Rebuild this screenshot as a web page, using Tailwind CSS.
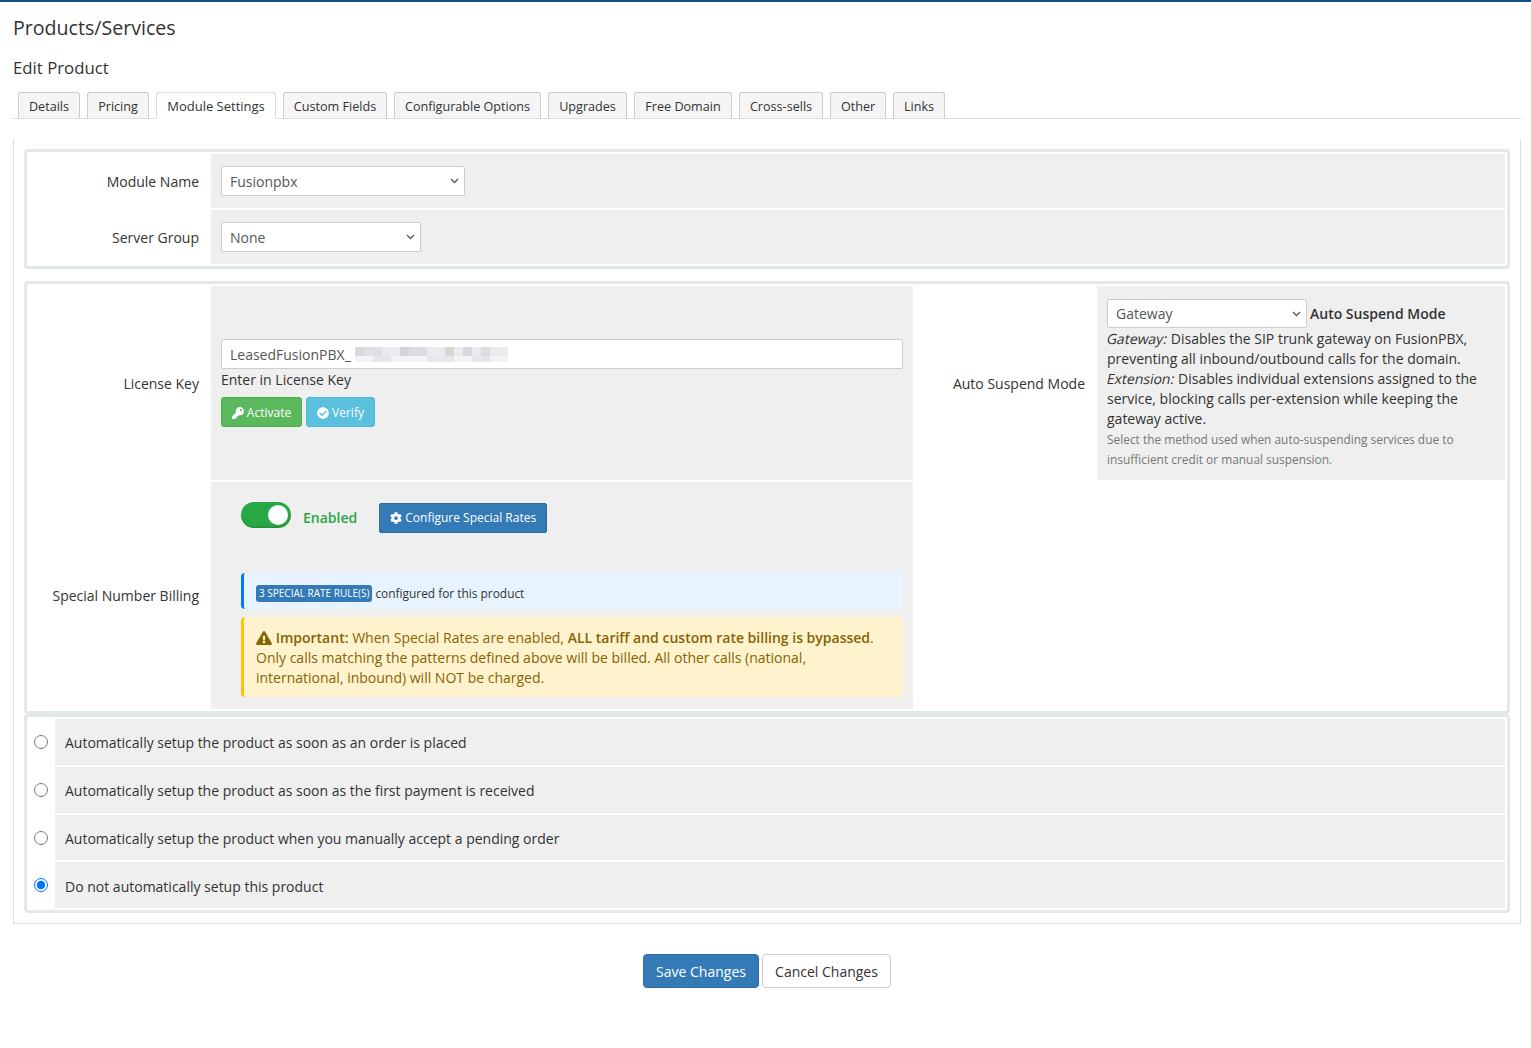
<!DOCTYPE html>
<html lang="en">
<head>
  <meta charset="utf-8">
  <title>Products/Services</title>
  <script src="https://cdn.jsdelivr.net/npm/@tailwindcss/browser@4"></script>
</head>
<body class="bg-white text-[#333] text-[14px] leading-[20px] font-['Open_Sans',sans-serif]">
  <div class="h-[2px] bg-[#1a4d80]"></div>
  <div class="px-[13px] pr-[10px] h-[1046px]">
    <h1 class="text-[19.6px] leading-[28px] mt-[12px] font-normal">Products/Services</h1>
    <h2 class="text-[16.8px] leading-[24px] mt-[14px] font-normal">Edit Product</h2>

    <!-- tabs -->
    <div class="flex gap-[7px] pl-[5px] mt-[12px] h-[27px] border-b border-[#ddd] text-[12.6px] text-center">
      <a class="h-[27px] w-[62px] pt-[4px] bg-[#f5f5f5] border border-[#ccc] border-b-[#ddd] rounded-t-[3px]">Details</a>
      <a class="h-[27px] w-[62px] pt-[4px] bg-[#f5f5f5] border border-[#ccc] border-b-[#ddd] rounded-t-[3px]">Pricing</a>
      <a class="h-[27px] w-[120px] pt-[3px] bg-white border border-[#ddd] border-b-white rounded-t-[3px] text-[13px]">Module Settings</a>
      <a class="h-[27px] w-[104px] pt-[4px] bg-[#f5f5f5] border border-[#ccc] border-b-[#ddd] rounded-t-[3px]">Custom Fields</a>
      <a class="h-[27px] w-[147px] pt-[4px] bg-[#f5f5f5] border border-[#ccc] border-b-[#ddd] rounded-t-[3px]">Configurable Options</a>
      <a class="h-[27px] w-[79px] pt-[4px] bg-[#f5f5f5] border border-[#ccc] border-b-[#ddd] rounded-t-[3px]">Upgrades</a>
      <a class="h-[27px] w-[98px] pt-[4px] bg-[#f5f5f5] border border-[#ccc] border-b-[#ddd] rounded-t-[3px]">Free Domain</a>
      <a class="h-[27px] w-[84px] pt-[4px] bg-[#f5f5f5] border border-[#ccc] border-b-[#ddd] rounded-t-[3px]">Cross-sells</a>
      <a class="h-[27px] w-[56px] pt-[4px] bg-[#f5f5f5] border border-[#ccc] border-b-[#ddd] rounded-t-[3px]">Other</a>
      <a class="h-[27px] w-[52px] pt-[4px] bg-[#f5f5f5] border border-[#ccc] border-b-[#ddd] rounded-t-[3px]">Links</a>
    </div>

    <!-- tab pane -->
    <div class="mt-[20px] w-[1508px] border border-t-0 border-[#ddd] px-[10px] pt-[10px] pb-[10px]">

      <div class="border-[3px] border-[#e3e8ea] rounded-[4px] p-[2px] pl-0 grid grid-cols-[184px_1fr] gap-y-[2px]">
        <div class="h-[54px] flex items-center justify-end pr-[12px] pt-[1px]">Module Name</div>
        <div class="h-[54px] bg-[#efefef] flex items-center pl-[10px]">
          <div class="relative">
            <select class="block appearance-none w-[244px] h-[30px] pl-[8px] pt-[2px] bg-white border border-[#ccc] rounded-[2px] text-[#555]"><option>Fusionpbx</option></select>
            <svg class="absolute right-[6px] top-[12px] w-[9px] h-[6px] stroke-[#555] fill-none" viewBox="0 0 9 6"><path d="M1 1l3.5 3.5L8 1" stroke-width="1.3"/></svg>
          </div>
        </div>
        <div class="h-[54px] flex items-center justify-end pr-[12px] pt-[1px]">Server Group</div>
        <div class="h-[54px] bg-[#efefef] flex items-center pl-[10px]">
          <div class="relative">
            <select class="block appearance-none w-[200px] h-[30px] pl-[8px] pt-[2px] bg-white border border-[#ccc] rounded-[2px] text-[#555]"><option>None</option></select>
            <svg class="absolute right-[6px] top-[12px] w-[9px] h-[6px] stroke-[#555] fill-none" viewBox="0 0 9 6"><path d="M1 1l3.5 3.5L8 1" stroke-width="1.3"/></svg>
          </div>
        </div>
      </div>

      <div class="mt-[12px] border-[3px] border-[#e3e8ea] rounded-[4px] p-[2px] pl-0 grid grid-cols-[184px_702px_184px_1fr] gap-y-[2px]">
        <div class="flex items-center justify-end pr-[12px] h-[194px] pt-[1px]">License Key</div>
        <div class="bg-[#efefef] h-[194px] pl-[10px] pr-[10px] pt-[53px]">
          <div class="relative">
            <input class="block w-full h-[30px] px-[8px] bg-white border border-[#ccc] rounded-[2px] text-[#555]" value="LeasedFusionPBX_">
            <svg class="absolute left-[134px] top-[8px]" width="153" height="15" viewBox="0 0 153 15">
              <rect width="153" height="9" fill="#ebebef"/>
              <rect y="9" width="153" height="6" fill="#f3f3f4"/>
              <rect x="0" width="9" height="9" fill="#d8d8e0"/>
              <rect x="9" width="18" height="9" fill="#e0e0e4"/>
              <rect x="45" width="9" height="9" fill="#d2d2d8"/>
              <rect x="54" width="18" height="9" fill="#dcdce0"/>
              <rect x="90" width="9" height="9" fill="#d6d6d2"/>
              <rect x="108" width="9" height="9" fill="#d8d8de"/>
              <rect x="126" width="9" height="9" fill="#dddde0"/>
              <rect x="18" y="9" width="18" height="6" fill="#e6e6e8"/>
              <rect x="72" y="9" width="27" height="6" fill="#e8e8ea"/>
              <rect x="117" y="9" width="18" height="6" fill="#e6e6e8"/>
            </svg>
          </div>
          <div class="mt-[1px]">Enter in License Key</div>
          <div class="flex gap-[4px] mt-[7px] text-[12px] text-white">
            <button class="h-[30px] w-[81px] pt-[1px] flex items-center justify-center gap-[3px] bg-[#5cb85c] border border-[#4cae4c] rounded-[3px]">
              <svg class="w-[12px] h-[12px] fill-white" viewBox="0 0 512 512"><path d="M512 176.001C512 273.203 433.202 352 336 352c-11.22 0-22.19-1.062-32.827-3.069l-24.012 27.014A23.999 23.999 0 0 1 261.223 384H224v40c0 13.255-10.745 24-24 24h-40v40c0 13.255-10.745 24-24 24H24c-13.255 0-24-10.745-24-24v-78.059c0-6.365 2.529-12.47 7.029-16.971l161.802-161.802C163.108 213.814 160 195.271 160 176 160 78.798 238.797.001 335.999 0 433.488-.001 512 78.511 512 176.001zM336 128c0 26.51 21.49 48 48 48s48-21.49 48-48-21.49-48-48-48-48 21.49-48 48z"/></svg>
              Activate
            </button>
            <button class="h-[30px] w-[69px] pt-[1px] flex items-center justify-center gap-[3px] bg-[#5bc0de] border border-[#46b8da] rounded-[3px]">
              <svg class="w-[12px] h-[12px] fill-white" viewBox="0 0 512 512"><path d="M504 256c0 136.967-111.033 248-248 248S8 392.967 8 256 119.033 8 256 8s248 111.033 248 248zM227.314 387.314l184-184c6.248-6.248 6.248-16.379 0-22.627l-22.627-22.627c-6.248-6.249-16.379-6.249-22.628 0L216 308.118l-70.059-70.059c-6.248-6.248-16.379-6.248-22.628 0l-22.627 22.627c-6.248 6.248-6.248 16.379 0 22.627l104 104c6.249 6.249 16.379 6.249 22.628.001z"/></svg>
              Verify
            </button>
          </div>
        </div>
        <div class="flex items-center justify-end pr-[12px] h-[194px] pt-[1px]">Auto Suspend Mode</div>
        <div class="bg-[#efefef] h-[194px] pl-[10px] pr-[8px] pt-[13px]">
          <div class="flex items-center gap-[3px]">
            <div class="relative">
              <select class="block appearance-none w-[200px] h-[29px] pl-[8px] bg-white border border-[#ccc] rounded-[2px] text-[#555]"><option>Gateway</option></select>
              <svg class="absolute right-[6px] top-[12px] w-[9px] h-[6px] stroke-[#555] fill-none" viewBox="0 0 9 6"><path d="M1 1l3.5 3.5L8 1" stroke-width="1.3"/></svg>
            </div>
            <b class="font-semibold">Auto Suspend Mode</b>
          </div>
          <div class="mt-[1px]"><span class="inline-block -skew-x-12">Gateway:</span> Disables the SIP trunk gateway on FusionPBX, preventing all inbound/outbound calls for the domain.</div>
          <div><span class="inline-block -skew-x-12">Extension:</span> Disables individual extensions assigned to the service, blocking calls per-extension while keeping the gateway active.</div>
          <div class="text-[11.9px] text-[#777]">Select the method used when auto-suspending services due to insufficient credit or manual suspension.</div>
        </div>

        <div class="flex items-center justify-end pr-[12px] h-[227px]">Special Number Billing</div>
        <div class="bg-[#efefef] h-[227px] pl-[30px] pr-[10px] pt-[20px]">
          <div class="flex items-center h-[32px]">
            <div class="w-[50px] h-[26px] -mt-[6px] rounded-full bg-[#28a745] shadow-[inset_0_-1px_2px_rgba(0,0,0,0.2)] flex items-center justify-end pr-[3px]">
              <span class="w-[20px] h-[20px] rounded-full bg-white"></span>
            </div>
            <span class="ml-[12px] font-semibold text-[#28a745]">Enabled</span>
            <button class="ml-[22px] h-[30px] w-[168px] flex items-center justify-center gap-[3px] bg-[#337ab7] border border-[#2e6da4] rounded-[2px] text-white text-[12px]">
              <svg class="w-[12px] h-[12px] fill-white" viewBox="0 0 512 512"><path d="M487.4 315.7l-42.6-24.6c4.3-23.2 4.3-47 0-70.2l42.6-24.6c4.9-2.8 7.1-8.6 5.5-14-11.1-35.6-30-67.8-54.7-94.6-3.8-4.1-10-5.1-14.8-2.3L380.8 110c-17.9-15.4-38.5-27.3-60.8-35.1V25.8c0-5.6-3.9-10.5-9.4-11.7-36.7-8.2-74.3-7.8-109.2 0-5.5 1.2-9.4 6.1-9.4 11.7V75c-22.2 7.9-42.8 19.8-60.8 35.1L88.7 85.5c-4.9-2.8-11-1.9-14.8 2.3-24.7 26.7-43.6 58.9-54.7 94.6-1.7 5.4.6 11.2 5.5 14L67.3 221c-4.3 23.2-4.3 47 0 70.2l-42.6 24.6c-4.9 2.8-7.1 8.6-5.5 14 11.1 35.6 30 67.8 54.7 94.6 3.8 4.1 10 5.1 14.8 2.3l42.6-24.6c17.9 15.4 38.5 27.3 60.8 35.1v49.2c0 5.6 3.9 10.5 9.4 11.7 36.7 8.2 74.3 7.8 109.2 0 5.5-1.2 9.4-6.1 9.4-11.7v-49.2c22.2-7.9 42.8-19.8 60.8-35.1l42.6 24.6c4.9 2.8 11 1.9 14.8-2.3 24.7-26.7 43.6-58.9 54.7-94.6 1.5-5.5-.7-11.3-5.6-14.1zM256 336c-44.1 0-80-35.9-80-80s35.9-80 80-80 80 35.9 80 80-35.9 80-80 80z"/></svg>
              Configure Special Rates
            </button>
          </div>
          <div class="mt-[39px] h-[36px] pt-[4px] bg-[#e7f3ff] border-l-[3px] border-[#007bff] rounded-[4px] pl-[12px] flex items-center gap-[3px] text-[11.9px]">
            <span class="h-[17px] px-[3px] flex items-center bg-[#337ab7] text-white text-[10px] rounded-[3px] uppercase">3 Special Rate Rule(s)</span>
            configured for this product
          </div>
          <div class="mt-[8px] h-[80px] bg-[#fff3cd] border-l-[3px] border-[#ffc107] rounded-[4px] pl-[12px] pr-[20px] pt-[11px] text-[#856404]">
            <svg class="inline-block align-[-2px] w-[16px] h-[14px] fill-[#856404]" viewBox="0 0 576 512"><path d="M569.517 440.013C587.975 472.007 564.806 512 527.94 512H48.054c-36.937 0-59.999-40.055-41.577-71.987L246.423 23.985c18.467-32.009 64.72-31.951 83.154 0l239.94 416.028zM288 354c-25.405 0-46 20.595-46 46s20.595 46 46 46 46-20.595 46-46-20.595-46-46-46zm-43.673-165.346l7.418 136c.347 6.364 5.609 11.346 11.982 11.346h48.546c6.373 0 11.635-4.982 11.982-11.346l7.418-136c.375-6.874-5.098-12.654-11.982-12.654h-63.383c-6.884 0-12.356 5.78-11.981 12.654z"/></svg>
            <b class="font-semibold">Important:</b> When Special Rates are enabled, <b class="font-semibold">ALL tariff and custom rate billing is bypassed</b>. Only calls matching the patterns defined above will be billed. All other calls (national, international, inbound) will NOT be charged.
          </div>
        </div>
        <div class="col-span-2 h-[227px]"></div>
      </div>

      <div class="border-[3px] border-[#e3e8ea] rounded-[4px] p-[2px] pl-0 flex flex-col gap-[2px]">
        <label class="flex h-[46px]">
          <span class="w-[28px] flex items-center pl-[7px]"><input type="radio" name="autosetup" class="w-[14px] h-[14px]"></span>
          <span class="flex-1 bg-[#efefef] flex items-center pl-[10px] pt-[1px]">Automatically setup the product as soon as an order is placed</span>
        </label>
        <label class="flex h-[46px]">
          <span class="w-[28px] flex items-center pl-[7px]"><input type="radio" name="autosetup" class="w-[14px] h-[14px]"></span>
          <span class="flex-1 bg-[#efefef] flex items-center pl-[10px] pt-[1px]">Automatically setup the product as soon as the first payment is received</span>
        </label>
        <label class="flex h-[45px]">
          <span class="w-[28px] flex items-center pl-[7px]"><input type="radio" name="autosetup" class="w-[14px] h-[14px]"></span>
          <span class="flex-1 bg-[#efefef] flex items-center pl-[10px] pt-[3px]">Automatically setup the product when you manually accept a pending order</span>
        </label>
        <label class="flex h-[46px]">
          <span class="w-[28px] flex items-center pl-[7px]"><input type="radio" name="autosetup" checked class="w-[14px] h-[14px]"></span>
          <span class="flex-1 bg-[#efefef] flex items-center pl-[10px] pt-[3px]">Do not automatically setup this product</span>
        </label>
      </div>
    </div>

    <div class="w-[1508px] mt-[30px] flex justify-center gap-[3px]">
      <button class="h-[34px] w-[116px] pt-[1px] bg-[#337ab7] border border-[#2e6da4] rounded-[4px] text-white">Save Changes</button>
      <button class="h-[34px] w-[129px] pt-[1px] bg-white border border-[#ccc] rounded-[4px]">Cancel Changes</button>
    </div>
  </div>
</body>
</html>
